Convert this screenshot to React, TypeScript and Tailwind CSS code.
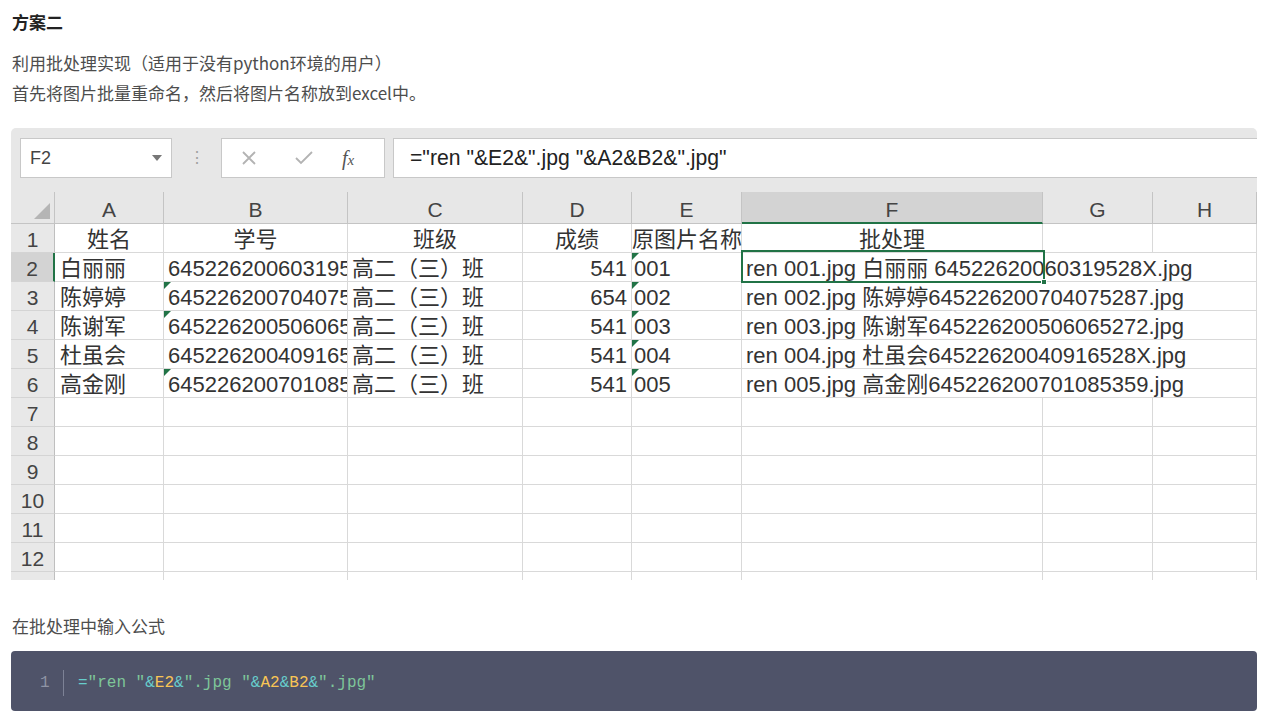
import React from 'react'

const colW = ['w-[109px]', 'w-[184px]', 'w-[175px]', 'w-[109px]', 'w-[110px]', 'w-[301px]', 'w-[110px]', 'w-[104px]']
const letters = ['A', 'B', 'C', 'D', 'E', 'F', 'G', 'H']

interface Row {
  name: string
  id: string
  cls: string
  score: string
  pic: string
  bat: string
  idMark: boolean
}

const rows: Row[] = [
  { name: '白丽丽', id: '645226200603195', cls: '高二（三）班', score: '541', pic: '001', bat: 'ren 001.jpg 白丽丽 64522620060319528X.jpg', idMark: false },
  { name: '陈婷婷', id: '645226200704075', cls: '高二（三）班', score: '654', pic: '002', bat: 'ren 002.jpg 陈婷婷645226200704075287.jpg', idMark: true },
  { name: '陈谢军', id: '645226200506065', cls: '高二（三）班', score: '541', pic: '003', bat: 'ren 003.jpg 陈谢军645226200506065272.jpg', idMark: true },
  { name: '杜虽会', id: '645226200409165', cls: '高二（三）班', score: '541', pic: '004', bat: 'ren 004.jpg 杜虽会64522620040916528X.jpg', idMark: false },
  { name: '高金刚', id: '645226200701085', cls: '高二（三）班', score: '541', pic: '005', bat: 'ren 005.jpg 高金刚645226200701085359.jpg', idMark: true },
]

function Mark() {
  return (
    <span className="absolute left-0 top-0 h-0 w-0 border-t-[7px] border-r-[7px] border-t-[#217346] border-r-transparent" />
  )
}

function RowHead({ n, active }: { n: number; active?: boolean }) {
  return (
    <div
      className={`w-[44px] shrink-0 border-b border-[#d4d4d4] pt-[2px] text-center text-[21px] leading-[28px] text-[#444] ${
        active ? 'bg-[#d3d3d3] border-r-2 border-r-[#217346]' : 'bg-[#e8e8e8] border-r border-r-[#bfbfbf]'
      }`}
    >
      {n}
    </div>
  )
}

function Cell({
  w,
  children,
  className = '',
  noRight,
}: {
  w: string
  children?: React.ReactNode
  className?: string
  noRight?: boolean
}) {
  return (
    <div
      className={`${w} relative shrink-0 whitespace-nowrap border-b border-[#d9d9d9] pt-[2px] leading-[28px] ${
        noRight ? '' : 'border-r'
      } ${className}`}
    >
      {children}
    </div>
  )
}

function Sheet() {
  return (
    <div className="h-[452px] w-[1246px] overflow-hidden rounded-t-[5px] bg-white font-['Liberation_Sans','Noto_Sans_CJK_SC',sans-serif] text-[#333]">
      {/* formula bar */}
      <div className="flex h-[64px] items-start bg-[#e7e7e7] pt-[10px]">
        <div className="ml-[9px] flex h-[40px] w-[152px] items-center justify-between border border-[#c8c8c8] bg-white pl-[9px] pr-[9px]">
          <span className="text-[18px] text-[#444]">F2</span>
          <span className="h-0 w-0 border-x-[5px] border-t-[6px] border-x-transparent border-t-[#777]" />
        </div>
        <div className="flex h-[40px] w-[49px] items-center justify-center text-[16px] text-[#a0a0a0]">⋮</div>
        <div className="flex h-[40px] w-[164px] items-center border border-[#c8c8c8] bg-white">
          <svg className="ml-[19px]" width="16" height="16" viewBox="0 0 16 16">
            <path d="M2 2 L14 14 M14 2 L2 14" stroke="#b3b3b3" strokeWidth="1.8" />
          </svg>
          <svg className="ml-[37px]" width="20" height="16" viewBox="0 0 20 16">
            <path d="M2 8 L7 13 L18 2" stroke="#b3b3b3" strokeWidth="1.8" fill="none" />
          </svg>
          <span className="ml-[28px] font-['Liberation_Serif',serif] text-[20px] italic text-[#555]">
            f<span className="text-[15px]">x</span>
          </span>
        </div>
        <div className="ml-[8px] flex h-[40px] flex-1 items-center border border-r-0 border-[#c8c8c8] bg-white pl-[16px] text-[21.2px] text-[#222]">
          ="ren "&E2&".jpg "&A2&B2&".jpg"
        </div>
      </div>

      {/* column headers */}
      <div className="flex h-[32px] bg-[#e7e7e7]">
        <div className="relative w-[44px] shrink-0 border-r border-b border-[#c4c4c4]">
          <span className="absolute bottom-[4px] right-[4px] h-0 w-0 border-b-[16px] border-l-[16px] border-b-[#b5b5b5] border-l-transparent" />
        </div>
        {letters.map((l, i) => (
          <div
            key={l}
            className={`${colW[i]} shrink-0 pt-[3px] text-center text-[21px] leading-[29px] text-[#444] ${
              l === 'F'
                ? 'bg-[#d3d3d3] border-b-2 border-b-[#217346] border-r border-r-[#c4c4c4]'
                : 'border-r border-b border-[#c4c4c4]'
            }`}
          >
            {l}
          </div>
        ))}
      </div>

      {/* row 1 */}
      <div className="flex h-[29px] text-[22px]">
        <RowHead n={1} />
        <Cell w={colW[0]} className="text-center">姓名</Cell>
        <Cell w={colW[1]} className="text-center">学号</Cell>
        <Cell w={colW[2]} className="text-center">班级</Cell>
        <Cell w={colW[3]} className="text-center">成绩</Cell>
        <Cell w={colW[4]}>原图片名称</Cell>
        <Cell w={colW[5]} className="text-center">批处理</Cell>
        <Cell w={colW[6]} />
        <Cell w={colW[7]} />
      </div>

      {rows.map((r, i) => (
        <div key={r.pic} className="flex h-[29px] text-[22px]">
          <RowHead n={i + 2} active={i === 0} />
          <Cell w={colW[0]} className="pl-[5px]">{r.name}</Cell>
          <Cell w={colW[1]} className="overflow-hidden pl-[4px]">
            {r.idMark && <Mark />}
            {r.id}
          </Cell>
          <Cell w={colW[2]} className="pl-[4px]">{r.cls}</Cell>
          <Cell w={colW[3]} className="pr-[4px] text-right">{r.score}</Cell>
          <Cell w={colW[4]} className="pl-[2px]">
            <Mark />
            {r.pic}
          </Cell>
          <Cell w={colW[5]} className="z-[1] pl-[4px]" noRight>
            {r.bat}
            {i === 0 && (
              <span className="pointer-events-none absolute -left-[1px] -right-[2px] -top-[3px] -bottom-[2px] border-2 border-[#217346]">
                <span className="absolute -bottom-[4px] -right-[4px] h-[6px] w-[6px] border border-white bg-[#217346]" />
              </span>
            )}
          </Cell>
          <Cell w={colW[6]} noRight />
          <Cell w={colW[7]} />
        </div>
      ))}

      {[7, 8, 9, 10, 11, 12, 13].map((n) => (
        <div key={n} className="flex h-[29px] text-[22px]">
          <RowHead n={n} />
          {colW.map((w) => (
            <Cell key={w + n} w={w} />
          ))}
        </div>
      ))}
    </div>
  )
}

export default function App() {
  return (
    <div className="min-h-screen bg-white px-[11px] font-['Noto_Sans_CJK_SC','Noto_Sans',sans-serif] text-[17px] text-[#4d4d4d]">
      <h3 className="pl-[1px] pt-[7px] font-bold leading-[30px] text-[#222]">方案二</h3>
      <p className="mt-[11px] pl-[1px] leading-[30px]">
        利用批处理实现（适用于没有python环境的用户）
        <br />
        首先将图片批量重命名，然后将图片名称放到excel中。
      </p>
      <div className="mt-[20px]">
        <Sheet />
      </div>
      <p className="mt-[31px] pl-[1px] leading-[30px]">在批处理中输入公式</p>
      <div className="mt-[10px] flex h-[60px] w-[1246px] items-center rounded-[4px] bg-[#4f5369] pt-[3px] font-['Liberation_Mono',monospace] text-[16px]">
        <span className="ml-[29px] w-[10px] text-[#8f94a5]">1</span>
        <span className="ml-[13px] h-[26px] w-px bg-[#7d8296]" />
        <code className="ml-[14px] whitespace-pre">
          <span className="text-[#67cdcc]">=</span>
          <span className="text-[#7ec699]">"ren "</span>
          <span className="text-[#67cdcc]">&</span>
          <span className="text-[#f8c555]">E2</span>
          <span className="text-[#67cdcc]">&</span>
          <span className="text-[#7ec699]">".jpg "</span>
          <span className="text-[#67cdcc]">&</span>
          <span className="text-[#f8c555]">A2</span>
          <span className="text-[#67cdcc]">&</span>
          <span className="text-[#f8c555]">B2</span>
          <span className="text-[#67cdcc]">&</span>
          <span className="text-[#7ec699]">".jpg"</span>
        </code>
      </div>
    </div>
  )
}
